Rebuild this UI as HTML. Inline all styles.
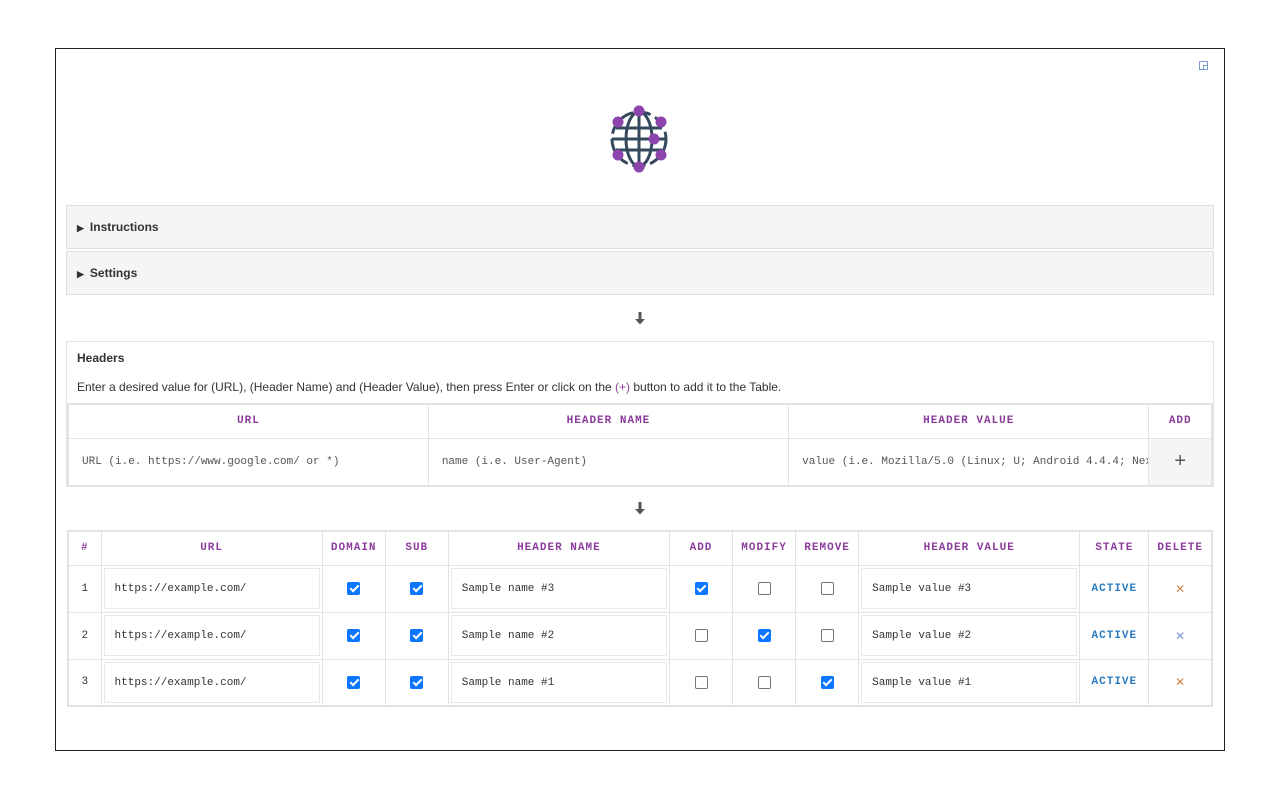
<!DOCTYPE html>
<html><head><meta charset="utf-8"><style>
*{box-sizing:border-box;margin:0;padding:0}
body{width:1280px;height:800px;background:#fff;font-family:"Liberation Sans",sans-serif;color:#333;position:relative;overflow:hidden}
.frame{position:absolute;left:55px;top:48px;width:1170px;height:703px;border:1px solid #222}
.acc{position:absolute;left:66px;width:1148px;height:44px;background:#f5f5f5;border:1px solid #ddd;font-size:12px;font-weight:bold;color:#333;padding:14px 0 0 10px}
.acc span{font-size:9px;margin-right:6px}
.arrow{position:absolute;left:634px}
.hdr{position:absolute;left:66px;top:341px;width:1148px;height:146px;border:1px solid #e3e3e3}
table{border-collapse:collapse;table-layout:fixed;position:absolute}
td,th{border:1px solid #e3e3e3;text-align:center;font-family:"Liberation Mono","DejaVu Sans Mono",monospace;font-size:11px}
th{color:#8b3c9b;font-weight:bold;letter-spacing:1px}
.cb{display:inline-block;width:13px;height:13px;border:1px solid #767676;border-radius:2px;vertical-align:middle;position:relative;background:#fff}
.cb.on{background:#0b76ff;border-color:#0b76ff}
.cb.on:after{content:"";position:absolute;left:3.5px;top:0.5px;width:3px;height:7px;border:solid #fff;border-width:0 2px 2px 0;transform:rotate(45deg)}
.inp{border:1px solid #e8e8e8;height:41px;margin:0 2px;text-align:left;padding:14px 10px;color:#333}
.act{color:#2b7bc0;font-weight:bold;letter-spacing:1px}
</style></head><body>
<div class="frame"></div>
<svg style="position:absolute;left:1199px;top:61px" width="10" height="10" viewBox="0 0 10 10"><rect x="0.5" y="0.5" width="8" height="8" fill="none" stroke="#7a9acc"/><path d="M4.5 8.5V4.5H8.5" fill="none" stroke="#7a9acc"/></svg>
<svg style="position:absolute;left:608px;top:104px" width="64" height="70" viewBox="0 0 64 70">
<g fill="none" stroke="#34495e" stroke-width="3">
<circle cx="31" cy="35" r="27" stroke-dasharray="13 5"/>
<ellipse cx="31" cy="35" rx="13" ry="27"/>
<line x1="31" y1="8" x2="31" y2="62"/>
<line x1="4" y1="35" x2="58" y2="35"/>
<line x1="8" y1="24" x2="54" y2="24"/>
<line x1="8" y1="46" x2="54" y2="46"/>
</g>
<g fill="#8e44ad">
<circle cx="31" cy="7" r="5.5"/><circle cx="31" cy="63" r="5.5"/>
<circle cx="10" cy="18" r="5.5"/><circle cx="53" cy="18" r="5.5"/>
<circle cx="10" cy="51" r="5.5"/><circle cx="53" cy="51" r="5.5"/>
<circle cx="46" cy="35" r="5.5"/>
</g></svg>
<div class="acc" style="top:205px"><span>▶</span>Instructions</div>
<div class="acc" style="top:251px"><span>▶</span>Settings</div>
<svg class="arrow" style="top:312px" width="12" height="13" viewBox="0 0 12 13"><path d="M4.5 0H7.5V7H11L6 12.5L1 7H4.5Z" fill="#555"/></svg>
<div class="hdr">
<div style="position:absolute;left:10px;top:9px;font-size:12px;font-weight:bold">Headers</div>
<div style="position:absolute;left:10px;top:38px;font-size:12px">Enter a desired value for (URL), (Header Name) and (Header Value), then press Enter or click on the <span style="color:#8b3c9b">(+)</span> button to add it to the Table.</div>
</div>
<table style="left:67px;top:403px;width:1146px;border:2px solid #e3e3e3">
<colgroup><col style="width:360px"><col style="width:360px"><col style="width:360px"><col style="width:63px"></colgroup>
<tr style="height:34px"><th>URL</th><th>HEADER NAME</th><th>HEADER VALUE</th><th>ADD</th></tr>
<tr style="height:48px"><td style="text-align:left;padding-left:13px;color:#555">URL (i.e. https://www.google.com/ or *)</td><td style="text-align:left;padding-left:13px;color:#555">name (i.e. User-Agent)</td><td style="text-align:left;padding-left:13px;color:#555;white-space:nowrap;overflow:hidden">value (i.e. Mozilla/5.0 (Linux; U; Android 4.4.4; Nexus</td><td style="background:#f5f5f5;font-size:20px;font-family:'Liberation Sans';color:#555">+</td></tr>
</table>
<svg class="arrow" style="top:502px" width="12" height="13" viewBox="0 0 12 13"><path d="M4.5 0H7.5V7H11L6 12.5L1 7H4.5Z" fill="#555"/></svg>
<table style="left:67px;top:530px;width:1146px;border:2px solid #e3e3e3">
<colgroup><col style="width:33px"><col style="width:221px"><col style="width:63px"><col style="width:63px"><col style="width:221px"><col style="width:63px"><col style="width:63px"><col style="width:63px"><col style="width:221px"><col style="width:69px"><col style="width:63px"></colgroup>
<tr style="height:34px"><th>#</th><th>URL</th><th>DOMAIN</th><th>SUB</th><th>HEADER NAME</th><th>ADD</th><th>MODIFY</th><th>REMOVE</th><th>HEADER VALUE</th><th>STATE</th><th>DELETE</th></tr>
<tr style="height:47px"><td>1</td><td><div class="inp">https://example.com/</div></td><td><i class="cb on"></i></td><td><i class="cb on"></i></td><td><div class="inp">Sample name #3</div></td><td><i class="cb on"></i></td><td><i class="cb"></i></td><td><i class="cb"></i></td><td><div class="inp">Sample value #3</div></td><td class="act">ACTIVE</td><td style="color:#d0884a;font-family:'DejaVu Sans';font-size:12px">✕</td></tr>
<tr style="height:47px"><td>2</td><td><div class="inp">https://example.com/</div></td><td><i class="cb on"></i></td><td><i class="cb on"></i></td><td><div class="inp">Sample name #2</div></td><td><i class="cb"></i></td><td><i class="cb on"></i></td><td><i class="cb"></i></td><td><div class="inp">Sample value #2</div></td><td class="act">ACTIVE</td><td style="color:#7a9acc;font-family:'DejaVu Sans';font-size:12px">✕</td></tr>
<tr style="height:47px"><td>3</td><td><div class="inp">https://example.com/</div></td><td><i class="cb on"></i></td><td><i class="cb on"></i></td><td><div class="inp">Sample name #1</div></td><td><i class="cb"></i></td><td><i class="cb"></i></td><td><i class="cb on"></i></td><td><div class="inp">Sample value #1</div></td><td class="act">ACTIVE</td><td style="color:#d0884a;font-family:'DejaVu Sans';font-size:12px">✕</td></tr>
</table>
</body></html>
